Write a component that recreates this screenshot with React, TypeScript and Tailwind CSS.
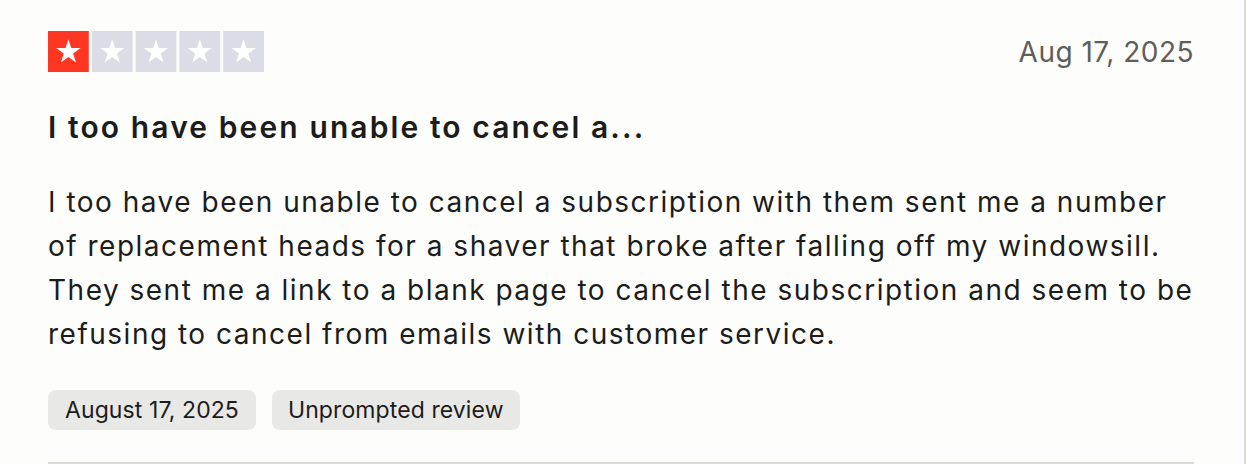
import React from "react";

function Stars() {
  const starPath =
    "M20.4 8.2l2.9 8.9h9.3l-7.5 5.5 2.9 8.9-7.6-5.5-7.5 5.5 2.9-8.9-7.6-5.5h9.4z";
  const colors = ["#ff3722", "#dcdce6", "#dcdce6", "#dcdce6", "#dcdce6"];
  return (
    <svg width="216" height="41" viewBox="0 0 216 41" aria-label="1 star">
      {colors.map((c, i) => (
        <g key={i} transform={`translate(${i * 43.8} 0)`}>
          <rect x="0" y="0" width="40.8" height="41" fill={c} />
          <path d={starPath} fill="#ffffff" />
        </g>
      ))}
    </svg>
  );
}

export default function App() {
  return (
    <div
      className="w-[1246px] h-[464px] bg-[#fdfdfc] border-r-2 border-[#dcd9d3] overflow-hidden"
      style={{ fontFamily: "Inter, 'Noto Sans', sans-serif" }}
    >
      <div className="pl-[48px] pr-[50px] pt-[31px]">
        <div className="flex items-center justify-between h-[41px]">
          <Stars />
          <span className="text-[28px] leading-[32px] tracking-[0.5px] text-[#5f5e5a]">Aug 17, 2025</span>
        </div>
        <h2 className="mt-[35px] text-[30px] leading-[40px] tracking-[2.1px] font-semibold text-[#1c1c1a]">
          I too have been unable to cancel a...
        </h2>
        <p className="mt-[33px] text-[28px] leading-[44px] tracking-[1.5px] text-[#1c1c1a]">
          I too have been unable to cancel a subscription with them sent me a number of replacement heads for a shaver that broke after falling off my windowsill. They sent me a link to a blank page to cancel the subscription and seem to be refusing to cancel from emails with customer service.
        </p>
        <div className="mt-[34px] flex gap-[16px]">
          <span className="h-[40px] px-[17px] flex items-center rounded-[8px] bg-[#e8e8e6] text-[23px] tracking-[0.1px] text-[#1c1c1a]">
            August 17, 2025
          </span>
          <span className="h-[40px] px-[16px] flex items-center rounded-[8px] bg-[#e8e8e6] text-[23px] tracking-[0.1px] text-[#1c1c1a]">
            Unprompted review
          </span>
        </div>
        <div className="mt-[32px] h-[2px] bg-[#dcd9d3]" />
      </div>
    </div>
  );
}
